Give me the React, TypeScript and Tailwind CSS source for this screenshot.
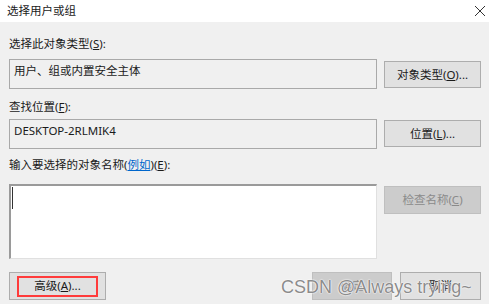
const font = { fontFamily: '"Segoe UI", "Noto Sans", "Noto Sans CJK SC", sans-serif' };

const Btn = ({ children, disabled, className = "" }: { children: React.ReactNode; disabled?: boolean; className?: string }) => (
  <div
    className={`flex items-center justify-center border text-[11.5px] ${
      disabled ? "border-[#bfbfbf] bg-[#cccccc] text-[#8a8a8a]" : "border-[#adadad] bg-[#e1e1e1] text-[#1a1a1a]"
    } ${className}`}
  >
    {children}
  </div>
);

export default function App() {
  return (
    <div className="relative h-[304px] w-[489px] overflow-hidden bg-[#f0f0f0] text-[#1a1a1a]" style={font}>
      {/* title bar */}
      <div className="flex h-[22px] items-center justify-between bg-white pl-[7px] pr-[3px]">
        <span className="text-[11.5px] text-[#1a1a1a]">选择用户或组</span>
        <svg width="12" height="12" viewBox="0 0 12 12">
          <path d="M1 1 L11 11 M11 1 L1 11" stroke="#333" strokeWidth="1" />
        </svg>
      </div>

      <div className="flex flex-col pl-[9px] pr-[8px]">
        <div className="mt-[15px] h-[14px] text-[11.5px] leading-[14px]">
          选择此对象类型(<u>S</u>):
        </div>
        <div className="mt-[8px] grid grid-cols-[368px_97px] gap-x-[7px]">
          <div className="h-[30px] border border-[#a9a9a9] bg-[#f0f0f0] px-[4px] pt-[3px] text-[11.5px] leading-[16px]">
            用户、组或内置安全主体
          </div>
          <Btn className="mt-[2px] h-[27px]">
            对象类型(<u>O</u>)...
          </Btn>
        </div>

        <div className="mt-[11px] h-[14px] text-[11.5px] leading-[14px]">
          查找位置(<u>F</u>):
        </div>
        <div className="mt-[5px] grid grid-cols-[368px_97px] gap-x-[7px]">
          <div className="h-[30px] border border-[#a9a9a9] bg-[#f0f0f0] px-[4px] pt-[3px] text-[11.5px] leading-[16px]">
            DESKTOP-2RLMIK4
          </div>
          <Btn className="mt-[1px] h-[27px]">
            位置(<u>L</u>)...
          </Btn>
        </div>

        <div className="mt-[9px] h-[14px] text-[11.5px] leading-[14px]">
          输入要选择的对象名称(<span className="text-[#0066cc] underline">例如</span>)(<u>E</u>):
        </div>
        <div className="mt-[12px] grid grid-cols-[368px_97px] gap-x-[7px]">
          <div className="h-[75px] border-t-2 border-l-2 border-r border-b border-t-[#9a9a9a] border-l-[#9a9a9a] border-r-[#e0e0e0] border-b-[#e0e0e0] bg-white pl-[1px] pt-[1px]">
            <div className="h-[22px] w-[1px] bg-[#333]" />
          </div>
          <Btn disabled className="mt-[2px] h-[28px]">
            检查名称(<u>C</u>)
          </Btn>
        </div>

        <div className="mt-[13px] flex h-[28px] items-stretch">
          <Btn className="w-[97px]">
            <div className="flex h-[21px] w-[81px] items-center justify-center border-2 border-[#ff3b3b]">
              高级(<u>A</u>)...
            </div>
          </Btn>
          <div className="flex-1" />
          <Btn disabled className="w-[80px]">
            确定
          </Btn>
          <Btn className="ml-[8px] w-[81px]">取消</Btn>
        </div>
      </div>

      {/* watermark */}
      <div
        className="pointer-events-none absolute left-[281px] top-[276px] whitespace-nowrap text-[18px] leading-[22px] text-[#8c8c8c] [text-shadow:0_0_1px_#fff,0_0_1px_#fff,0_0_2px_#fff]"
        style={{ fontFamily: '"Liberation Sans", Arial, sans-serif' }}
      >
        CSDN @Always trying~
      </div>
    </div>
  );
}
